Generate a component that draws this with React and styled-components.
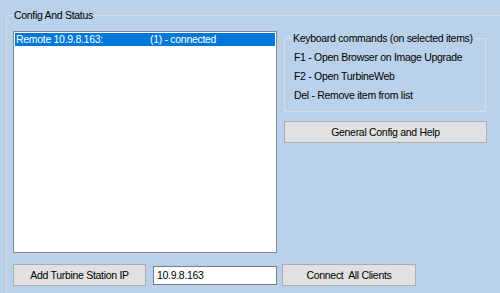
import React from "react";
import styled, { createGlobalStyle } from "styled-components";

const GlobalStyle = createGlobalStyle`
  html, body {
    margin: 0;
    padding: 0;
    background: #b9d1ea;
    overflow: hidden;
  }
  body {
    font-family: "Liberation Sans", Arial, sans-serif;
    font-size: 10.5px;
    letter-spacing: -0.3px;
    color: #000;
  }
`;

const Window = styled.div`
  width: 500px;
  height: 293px;
  padding: 9px 0 0 6px;
  box-sizing: border-box;
  overflow: hidden;
`;

const GroupBox = styled.fieldset`
  margin: 0;
  border: 1px solid #dcdcdc;
  border-radius: 0;
  padding: ${(p) => p.$pad || "9px 6px 0 6px"};
  box-sizing: border-box;
  width: ${(p) => p.$width || "auto"};
  height: ${(p) => p.$height || "auto"};
`;

const Legend = styled.legend`
  padding: 0 1px;
  line-height: 13px;
  white-space: nowrap;
  color: #000;
`;

const TopRow = styled.div`
  display: flex;
  gap: 7px;
`;

const ListBox = styled.div`
  width: 264px;
  height: 222px;
  box-sizing: border-box;
  background: #fff;
  border: 1px solid #828790;
  padding: 1px;
`;

const ListItem = styled.div`
  display: flex;
  height: 13px;
  line-height: 13px;
  padding-left: 1px;
  background: ${(p) => (p.$selected ? "#0078d7" : "transparent")};
  color: ${(p) => (p.$selected ? "#fff" : "#000")};
  white-space: pre;
`;

const Host = styled.span`
  width: 134px;
`;

const SidePanel = styled.div`
  display: flex;
  flex-direction: column;
  gap: 9px;
  width: 203px;
  padding-top: 1px;
`;

const Commands = styled.div`
  display: flex;
  flex-direction: column;
  gap: 6px;
  padding: 6px 0 0 2px;
`;

const Command = styled.div`
  line-height: 13px;
  white-space: nowrap;
`;

const Button = styled.button`
  width: ${(p) => p.$width};
  height: 22px;
  margin: 0;
  padding: 0;
  box-sizing: border-box;
  background: #e1e1e1;
  border: 1px solid #adadad;
  border-radius: 0;
  font-family: inherit;
  font-size: inherit;
  letter-spacing: inherit;
  color: #000;
  white-space: pre;
`;

const BottomRow = styled.div`
  display: flex;
  align-items: center;
  gap: 7px;
  margin-top: 11px;
`;

const TextBox = styled.input`
  width: 124px;
  height: 19px;
  margin: 0;
  padding: 0 3px;
  box-sizing: border-box;
  border: 1px solid #7a7a7a;
  background: #fff;
  font-family: inherit;
  font-size: inherit;
  letter-spacing: inherit;
  color: #000;
  outline: none;
`;

const ConnectButton = styled(Button)`
  margin-left: -2px;
`;

export default function App() {
  return (
    <>
      <GlobalStyle />
      <Window>
        <GroupBox $width="520px" $height="300px">
          <Legend>Config And Status</Legend>
          <TopRow>
            <ListBox>
              <ListItem $selected>
                <Host>Remote 10.9.8.163:</Host>
                <span>(1) - connected</span>
              </ListItem>
            </ListBox>
            <SidePanel>
              <GroupBox $width="202px" $height="80px" $pad="0 0 0 7px">
                <Legend>Keyboard commands (on selected items)</Legend>
                <Commands>
                  <Command>F1 - Open Browser on Image Upgrade</Command>
                  <Command>F2 - Open TurbineWeb</Command>
                  <Command>Del - Remove item from list</Command>
                </Commands>
              </GroupBox>
              <Button $width="203px">General Config and Help</Button>
            </SidePanel>
          </TopRow>
          <BottomRow>
            <Button $width="133px">Add Turbine Station IP</Button>
            <TextBox defaultValue="10.9.8.163" />
            <ConnectButton $width="134px">Connect  All Clients</ConnectButton>
          </BottomRow>
        </GroupBox>
      </Window>
    </>
  );
}
